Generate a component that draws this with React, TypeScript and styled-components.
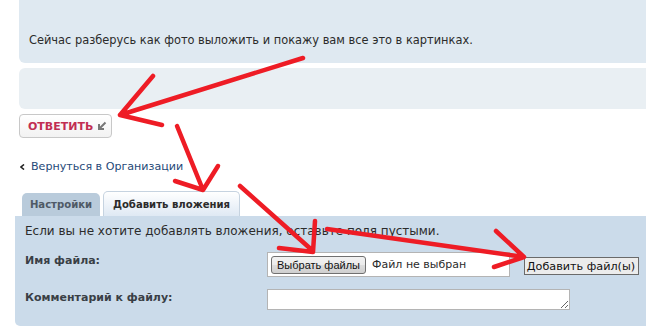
import React from "react";
import styled, { createGlobalStyle } from "styled-components";

const GlobalStyle = createGlobalStyle`
  body {
    margin: 0;
    background: #fff;
    font-family: "DejaVu Sans", Verdana, sans-serif;
    color: #2c2c2c;
  }
`;

const Page = styled.div`
  position: relative;
  width: 646px;
  height: 333px;
  overflow: hidden;
`;

const MessagePanel = styled.div`
  margin-left: 19px;
  height: 63px;
  box-sizing: border-box;
  padding: 33px 0 0 10px;
  background: #dfe9f1;
  border-bottom-left-radius: 6px;
  font-size: 11.4px;
  color: #2b2b2b;
`;

const QuickReply = styled.div`
  margin: 5px 0 0 19px;
  height: 41px;
  background: #e9eff3;
  border-radius: 6px 0 0 6px;
`;

const ReplyButton = styled.div`
  margin: 5px 0 0 19px;
  width: 93px;
  height: 24px;
  box-sizing: border-box;
  border: 1px solid #c8c8c8;
  border-radius: 4px;
  background: linear-gradient(#ffffff, #f2f2f2);
  display: flex;
  align-items: center;
  padding-left: 8px;
  gap: 4px;
  font-size: 11px;
  font-weight: bold;
  color: #c12e52;
`;

const BackLink = styled.div`
  margin: 22px 0 0 20px;
  display: flex;
  align-items: center;
  gap: 6px;
  font-size: 11.1px;
  color: #264a78;
`;

const TabRow = styled.div`
  margin: 18px 0 0 22px;
  display: flex;
  align-items: flex-end;
  gap: 3px;
  height: 25px;
`;

const Tab = styled.div<{ $active?: boolean }>`
  width: ${(p) => (p.$active ? "137px" : "78px")};
  height: ${(p) => (p.$active ? "25px" : "23px")};
  box-sizing: border-box;
  display: flex;
  align-items: center;
  justify-content: center;
  border-radius: 5px 5px 0 0;
  font-size: 10.1px;
  font-weight: bold;
  color: ${(p) => (p.$active ? "#2b2b2b" : "#4f5a66")};
  background: ${(p) =>
    p.$active ? "linear-gradient(#ffffff, #dfe9f4)" : "#b9cbdb"};
  border: ${(p) => (p.$active ? "1px solid #c6d3e0" : "none")};
  border-bottom: none;
`;

const FormPanel = styled.div`
  margin-left: 15px;
  height: 110px;
  box-sizing: border-box;
  padding: 8px 0 0 10px;
  background: #cbdbea;
  border-radius: 0 0 0 5px;
`;

const Hint = styled.div`
  font-size: 12px;
  color: #2b2b2b;
`;

const FieldRow = styled.div<{ $top: number }>`
  margin-top: ${(p) => p.$top}px;
  display: grid;
  grid-template-columns: 242px auto auto;
  align-items: start;
`;

const Label = styled.div`
  font-size: 11px;
  font-weight: bold;
  color: #3a3f46;
  padding-top: 2px;
`;

const FileBox = styled.div`
  width: 243px;
  height: 25px;
  box-sizing: border-box;
  border: 1px solid #b4b4b4;
  background: #fff;
  display: flex;
  align-items: center;
  padding-left: 3px;
  gap: 6px;
`;

const NativeButton = styled.div`
  width: 95px;
  height: 18px;
  box-sizing: border-box;
  border: 1px solid #707070;
  border-radius: 3px;
  background: linear-gradient(#f2f2f2 0%, #ebebeb 50%, #dddddd 51%, #cfcfcf 100%);
  display: flex;
  align-items: center;
  justify-content: center;
  font-family: "Liberation Sans", Arial, sans-serif;
  font-size: 11px;
  color: #111;
`;

const FileStatus = styled.span`
  font-size: 11px;
  color: #2b2b2b;
`;

const AddButton = styled.div`
  margin: 5px 0 0 6px;
  width: 115px;
  height: 18px;
  box-sizing: border-box;
  border: 1px solid #6a6a6a;
  background: #ececec;
  display: flex;
  align-items: center;
  justify-content: center;
  font-size: 11.2px;
  color: #111;
`;

const Comment = styled.textarea`
  width: 303px;
  height: 21px;
  box-sizing: border-box;
  border: 1px solid #b4b4b4;
  margin: 0;
  padding: 0;
  resize: both;
  background: #fff;
`;

const Scribbles = styled.svg`
  position: absolute;
  left: 0;
  top: 0;
  pointer-events: none;
`;

const arrows = [
  "M303 58 L120 115 M153 76 L120 115 L162 125",
  "M177 126 L203 190 M218 166 L203 190 L175 181",
  "M240 186 L313 251 M315 221 L313 252 L279 248",
  "M327 229 L524 257 M496 231 L524 257 L494 267",
];

export default function App() {
  return (
    <Page>
      <GlobalStyle />
      <MessagePanel>
        Сейчас разберусь как фото выложить и покажу вам все это в картинках.
      </MessagePanel>
      <QuickReply />
      <ReplyButton>
        ОТВЕТИТЬ
        <svg width="10" height="10" viewBox="0 0 10 10">
          <path d="M8.5 1.5 L2.5 7.5 M2 3 V8 H7" stroke="#777" strokeWidth="2" fill="none" />
        </svg>
      </ReplyButton>
      <BackLink>
        <svg width="5" height="6" viewBox="0 0 5 6">
          <path d="M4 0.5 L1 3 L4 5.5" stroke="#222" strokeWidth="1.6" fill="none" />
        </svg>
        Вернуться в Организации
      </BackLink>
      <TabRow>
        <Tab>Настройки</Tab>
        <Tab $active>Добавить вложения</Tab>
      </TabRow>
      <FormPanel>
        <Hint>Если вы не хотите добавлять вложения, оставьте поля пустыми.</Hint>
        <FieldRow $top={14}>
          <Label>Имя файла:</Label>
          <FileBox>
            <NativeButton>Выбрать файлы</NativeButton>
            <FileStatus>Файл не выбран</FileStatus>
          </FileBox>
          <AddButton>Добавить файл(ы)</AddButton>
        </FieldRow>
        <FieldRow $top={12}>
          <Label>Комментарий к файлу:</Label>
          <Comment />
        </FieldRow>
      </FormPanel>
      <Scribbles width="646" height="333">
        {arrows.map((d, i) => (
          <path
            key={i}
            d={d}
            stroke="#ee1c25"
            strokeWidth="4.5"
            strokeLinecap="round"
            strokeLinejoin="round"
            fill="none"
          />
        ))}
      </Scribbles>
    </Page>
  );
}
